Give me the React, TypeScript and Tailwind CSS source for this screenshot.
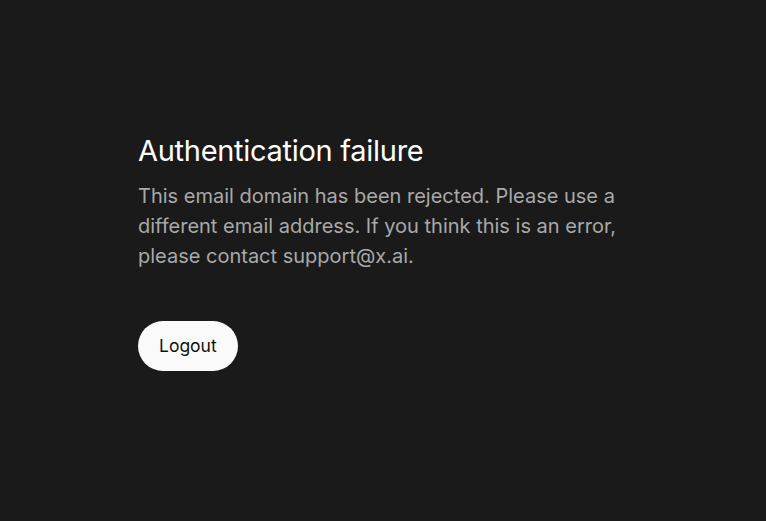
export default function App() {
  return (
    <div
      className="flex min-h-screen items-center justify-center bg-[#1a1a1a] pb-[18px]"
      style={{ fontFamily: 'Inter, "Noto Sans", sans-serif' }}
    >
      <div className="w-[490px]">
        <h1 className="text-[29px] leading-[36px] font-normal tracking-[-0.01em] text-white">Authentication failure</h1>
        <p className="mt-[12px] text-[20px] leading-[30px] text-[#a9a9a9]">
          This email domain has been rejected. Please use a different email address. If you think this is an error,
          please contact support@x.ai.
        </p>
        <button className="mt-[50px] h-[50px] rounded-full bg-[#fafafa] px-[21px] pt-[2px] text-[17.5px] text-[#111]">
          Logout
        </button>
      </div>
    </div>
  )
}
